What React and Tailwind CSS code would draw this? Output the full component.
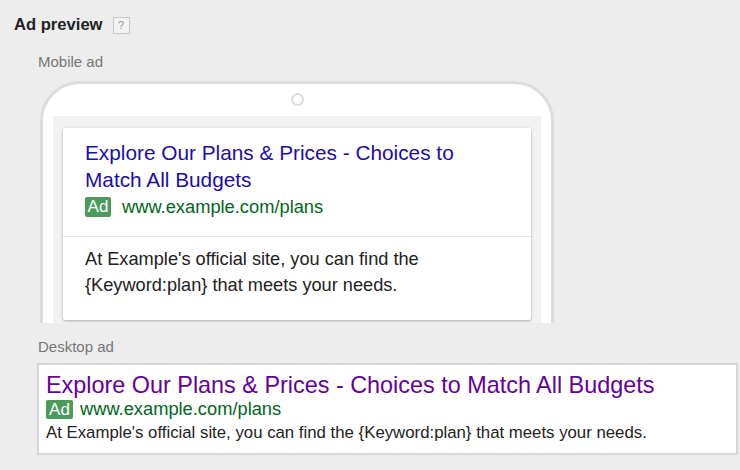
export default function App() {
  const font = { fontFamily: '"Liberation Sans", Arial, sans-serif' }
  return (
    <div className="w-[740px] h-[470px] overflow-hidden bg-[#ededed]" style={font}>
      <div className="pl-[14px] pt-[15px]">
        <div className="flex items-center gap-[10px]">
          <span className="text-[16.6px] font-bold text-[#222] leading-[20px]">Ad preview</span>
          <span className="w-[17px] h-[17px] border border-[#c8c8c8] bg-[#f3f3f3] text-[11px] text-[#999] flex items-center justify-center leading-none">?</span>
        </div>
      </div>

      <div className="pl-[38px]">
        <div className="mt-[18px] text-[15px] text-[#777] leading-[18px]">Mobile ad</div>

        {/* Телефон */}
        <div className="mt-[10px] ml-[2px] w-[514px] h-[242px] overflow-hidden">
          <div className="w-full h-[300px] rounded-t-[40px] border-[3px] border-[#dcdcdc] bg-white flex flex-col items-center">
            <div className="mt-[9px] w-[13px] h-[13px] rounded-full border-2 border-[#dcdcdc]" />
            <div className="mt-[10px] w-[488px] flex-1 bg-[#f2f2f2] px-[10px] pt-[12px]">
              <div className="bg-white rounded-[2px] shadow-[0_1px_3px_rgba(0,0,0,0.3)]">
                <div className="px-[22px] pt-[11px] pb-[19px]">
                  <div className="text-[20.8px] leading-[27px] text-[#1a0dab]">
                    Explore Our Plans &amp; Prices - Choices to<br />Match All Budgets
                  </div>
                  <div className="flex items-center gap-[11px] mt-[4px] h-[20px]">
                    <span className="bg-[#4a9a5b] text-white text-[17px] leading-[20px] w-[26px] text-center rounded-[2px]">Ad</span>
                    <span className="text-[18.3px] text-[#006621] leading-[22px]">www.example.com/plans</span>
                  </div>
                </div>
                <div className="border-t border-[#e6e6e6] px-[22px] pt-[9px] pb-[22px] text-[18.2px] leading-[26px] text-[#222]">
                  At Example's official site, you can find the<br />{'{Keyword:plan}'} that meets your needs.
                </div>
              </div>
            </div>
          </div>
        </div>

        <div className="mt-[15px] text-[15px] text-[#777] leading-[18px]">Desktop ad</div>
      </div>

      <div className="ml-[37px] mt-[7px] w-[701px] border-2 border-[#d6d6d6] bg-white px-[7px] pt-[8px] pb-[8px]">
        <div className="text-[23.4px] leading-[24px] text-[#660099]">
          Explore Our Plans &amp; Prices - Choices to Match All Budgets
        </div>
        <div className="flex items-center gap-[7px] h-[24px]">
          <span className="bg-[#4a9a5b] text-white text-[17px] leading-[19px] w-[27px] text-center rounded-[2px]">Ad</span>
          <span className="text-[18.3px] text-[#006621] leading-[22px]">www.example.com/plans</span>
        </div>
        <div className="text-[16.8px] leading-[24px] text-[#222]">
          At Example's official site, you can find the {'{Keyword:plan}'} that meets your needs.
        </div>
      </div>
    </div>
  )
}
